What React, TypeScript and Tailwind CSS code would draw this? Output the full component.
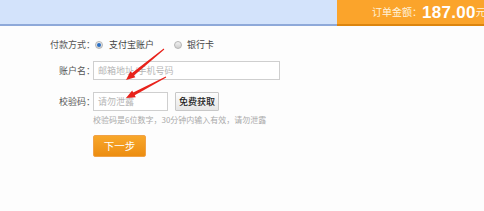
import React from 'react'

const CN = { fontFamily: '"Noto Sans CJK SC", "Noto Sans", sans-serif' }

// tapered red arrow drawn from start point to tip
function arrowPoints(sx: number, sy: number, tx: number, ty: number) {
  const dx = tx - sx
  const dy = ty - sy
  const len = Math.hypot(dx, dy)
  const ux = dx / len
  const uy = dy / len
  const nx = -uy
  const ny = ux
  const head = 9
  const bx = tx - ux * head
  const by = ty - uy * head
  const p = (x: number, y: number) => `${x.toFixed(1)},${y.toFixed(1)}`
  return [
    p(sx + nx * 0.5, sy + ny * 0.5),
    p(bx + nx * 1.6, by + ny * 1.6),
    p(bx + nx * 3.9, by + ny * 3.9),
    p(tx, ty),
    p(bx - nx * 3.9, by - ny * 3.9),
    p(bx - nx * 1.6, by - ny * 1.6),
    p(sx - nx * 0.5, sy - ny * 0.5),
  ].join(' ')
}

function Radio({ checked }: { checked?: boolean }) {
  return (
    <span className="w-[8px] h-[8px] rounded-full border border-[#b5b5b5] bg-gradient-to-b from-[#f2f2f2] to-[#cfcfcf] flex items-center justify-center">
      {checked && <span className="w-[4px] h-[4px] rounded-full bg-[#2a6fc4]" />}
    </span>
  )
}

export default function App() {
  return (
    <div className="relative w-[484px] h-[211px] bg-[#fdfdfd] overflow-hidden" style={CN}>
      {/* Header */}
      <div className="flex h-[26px]">
        <div className="flex-1 bg-[#d3e3fb] border-b-2 border-[#8ea9d9]" />
        <div className="w-[147px] bg-[#fba42b] border-b-2 border-[#dc850e] flex items-end pb-[3px] pl-[35px] whitespace-nowrap">
          <span className="text-[10px] text-[#fff3dc] mb-[2px]">订单金额：</span>
          <span
            className="text-[17px] font-bold text-white leading-none tracking-[0.3px]"
            style={{ fontFamily: '"Liberation Sans", Arial, sans-serif' }}
          >
            187.00
          </span>
          <span className="text-[10px] text-[#fff3dc] mb-[2px]">元</span>
        </div>
      </div>

      {/* Form */}
      <div className="flex flex-col text-[9px] text-[#555]">
        <div className="flex items-center h-[20px] mt-[9px]">
          <div className="w-[95px] text-right">付款方式：</div>
          <div className="flex items-center gap-[6px]">
            <Radio checked />
            <span className="text-[#444]">支付宝账户</span>
          </div>
          <div className="flex items-center ml-[20px] gap-[5px]">
            <Radio />
            <span className="text-[#444]">银行卡</span>
          </div>
        </div>

        <div className="flex items-center h-[19px] mt-[6px]">
          <div className="w-[95px] text-right">账户名：</div>
          <div className="-ml-[2px] w-[187px] h-[19px] border border-[#cfcfcf] bg-white flex items-center pl-[4px] text-[#b5b5b5]">
            邮箱地址/手机号码
          </div>
        </div>

        <div className="flex items-center h-[19px] mt-[12px]">
          <div className="w-[95px] text-right">校验码：</div>
          <div className="-ml-[2px] w-[75px] h-[19px] border border-[#cfcfcf] bg-white flex items-center pl-[4px] text-[#b5b5b5]">
            请勿泄露
          </div>
          <div className="ml-[7px] w-[44px] h-[19px] border border-[#c8c8c8] rounded-[1px] bg-gradient-to-b from-[#fdfdfd] to-[#e6e6e6] flex items-center justify-center text-[9px] font-medium text-[#222]">
            免费获取
          </div>
        </div>

        <div className="ml-[93px] mt-[3px] h-[12px] flex items-center text-[8px] text-[#aaa] whitespace-nowrap">
          校验码是6位数字，30分钟内输入有效，请勿泄露
        </div>

        <div className="ml-[93px] mt-[9px] w-[53px] h-[22px] rounded-[2px] bg-gradient-to-b from-[#f8a72a] to-[#ec8d10] border border-[#f1a247] flex items-center justify-center text-[10.5px] text-white">
          下一步
        </div>
      </div>

      {/* Red annotation arrows */}
      <svg className="absolute left-0 top-0 pointer-events-none" width="484" height="211">
        <polygon points={arrowPoints(164, 49, 126, 80)} fill="#e8221b" />
        <polygon points={arrowPoints(166, 77, 126, 98)} fill="#e8221b" />
      </svg>
    </div>
  )
}
